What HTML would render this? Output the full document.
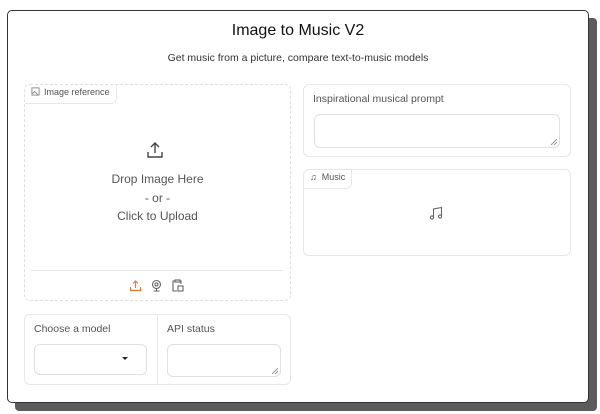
<!DOCTYPE html><html><head><style>
*{box-sizing:border-box;margin:0;padding:0}
body{width:600px;height:414px;background:#fff;font-family:"Liberation Sans",sans-serif;position:relative;overflow:hidden;color:#4b5563}
.a{position:absolute}
.sh{left:15px;top:18px;width:582px;height:393px;background:#5c5c5c;border-radius:4px}
.card{left:7px;top:10px;width:582px;height:393px;background:#fff;border:1px solid #333;border-radius:5px}
.box{border:1px solid #e5e7eb;border-radius:6px;background:#fff}
.lbl{font-size:10.5px;color:#555}
.ta{border:1px solid #e0e0e0;border-radius:6px;background:#fff}
.tab{border:1px solid #e5e7eb;border-top:none;border-left:none;border-radius:0 0 6px 0;font-size:9px;color:#555;padding:3px 6px}
.rh{position:absolute;right:2px;bottom:2px}
</style></head><body>
<div class="a sh"></div>
<div class="a card"></div>
<div class="a" style="left:7px;top:22px;width:582px;text-align:center;font-size:16px;color:#111">Image to Music V2</div>
<div class="a" style="left:7px;top:52px;width:582px;text-align:center;font-size:10.5px;color:#333">Get music from a picture, compare text-to-music models</div>

<div class="a" style="left:24px;top:84px;width:267px;height:217px;border:1px dashed #e0e0e0;border-radius:6px"></div>
<div class="a tab" style="left:25px;top:84px;height:20px;border-top:none;border-left:none">
<svg width="9" height="9" viewBox="0 0 10 10" style="vertical-align:-1px;margin-right:4px"><rect x="1" y="1" width="8" height="8" fill="none" stroke="#888"/><path d="M1 8l3-3 4 4" fill="none" stroke="#888"/></svg>Image reference</div>
<svg class="a" style="left:146px;top:141px" width="18" height="18" viewBox="0 0 18 18" fill="none" stroke="#444" stroke-width="1.4"><path d="M9 12V2M5 6l4-4 4 4M2 11v5h14v-5"/></svg>
<div class="a" style="left:24px;top:170px;width:267px;text-align:center;font-size:12px;color:#555;line-height:18.5px">Drop Image Here<br>- or -<br>Click to Upload</div>
<div class="a" style="left:31px;top:270px;width:252px;height:1px;background:#e8e8e8"></div>
<svg class="a" style="left:129px;top:279px" width="13" height="13" viewBox="0 0 13 13" fill="none" stroke="#e07b39" stroke-width="1.2"><path d="M6.5 9V2M4 4.5l2.5-2.5 2.5 2.5M1.5 8v3.5h10V8"/></svg>
<svg class="a" style="left:150px;top:279px" width="13" height="13" viewBox="0 0 13 13" fill="none" stroke="#666" stroke-width="1.1"><circle cx="6.5" cy="5.5" r="4"/><circle cx="6.5" cy="5.5" r="1.6"/><path d="M3.5 12h6M6.5 9.5V12"/></svg>
<svg class="a" style="left:171px;top:279px" width="13" height="13" viewBox="0 0 13 13" fill="none" stroke="#666" stroke-width="1.1"><path d="M4 2H2v10h4M9 2h1v3"/><rect x="4" y="1" width="5" height="2"/><rect x="7" y="7" width="5" height="5"/></svg>

<div class="a box" style="left:24px;top:314px;width:267px;height:71px"></div>
<div class="a" style="left:157px;top:315px;width:1px;height:69px;background:#e5e7eb"></div>
<div class="a lbl" style="left:34px;top:323px">Choose a model</div>
<div class="a ta" style="left:34px;top:344px;width:113px;height:31px"></div>
<div class="a" style="left:122px;top:357px;width:0;height:0;border-left:3px solid transparent;border-right:3px solid transparent;border-top:3px solid #222"></div>
<div class="a lbl" style="left:167px;top:323px">API status</div>
<div class="a ta" style="left:167px;top:344px;width:114px;height:33px"><svg class="rh" width="6" height="6" viewBox="0 0 6 6" stroke="#999"><path d="M0 6L6 0M3 6L6 3"/></svg></div>

<div class="a box" style="left:303px;top:84px;width:268px;height:73px"></div>
<div class="a lbl" style="left:313px;top:93px">Inspirational musical prompt</div>
<div class="a ta" style="left:314px;top:114px;width:246px;height:34px"><svg class="rh" width="6" height="6" viewBox="0 0 6 6" stroke="#999"><path d="M0 6L6 0M3 6L6 3"/></svg></div>

<div class="a box" style="left:303px;top:169px;width:268px;height:87px"></div>
<div class="a tab" style="left:304px;top:169px;height:20px;border-top:none;border-left:none">♫&nbsp;&nbsp;Music</div>
<svg class="a" style="left:429px;top:206px" width="15" height="15" viewBox="0 0 15 15" fill="none" stroke="#666" stroke-width="1.1"><path d="M4.5 11V3l8-1.5V10"/><circle cx="3" cy="11.5" r="1.6"/><circle cx="11" cy="10.5" r="1.6"/></svg>
</body></html>
